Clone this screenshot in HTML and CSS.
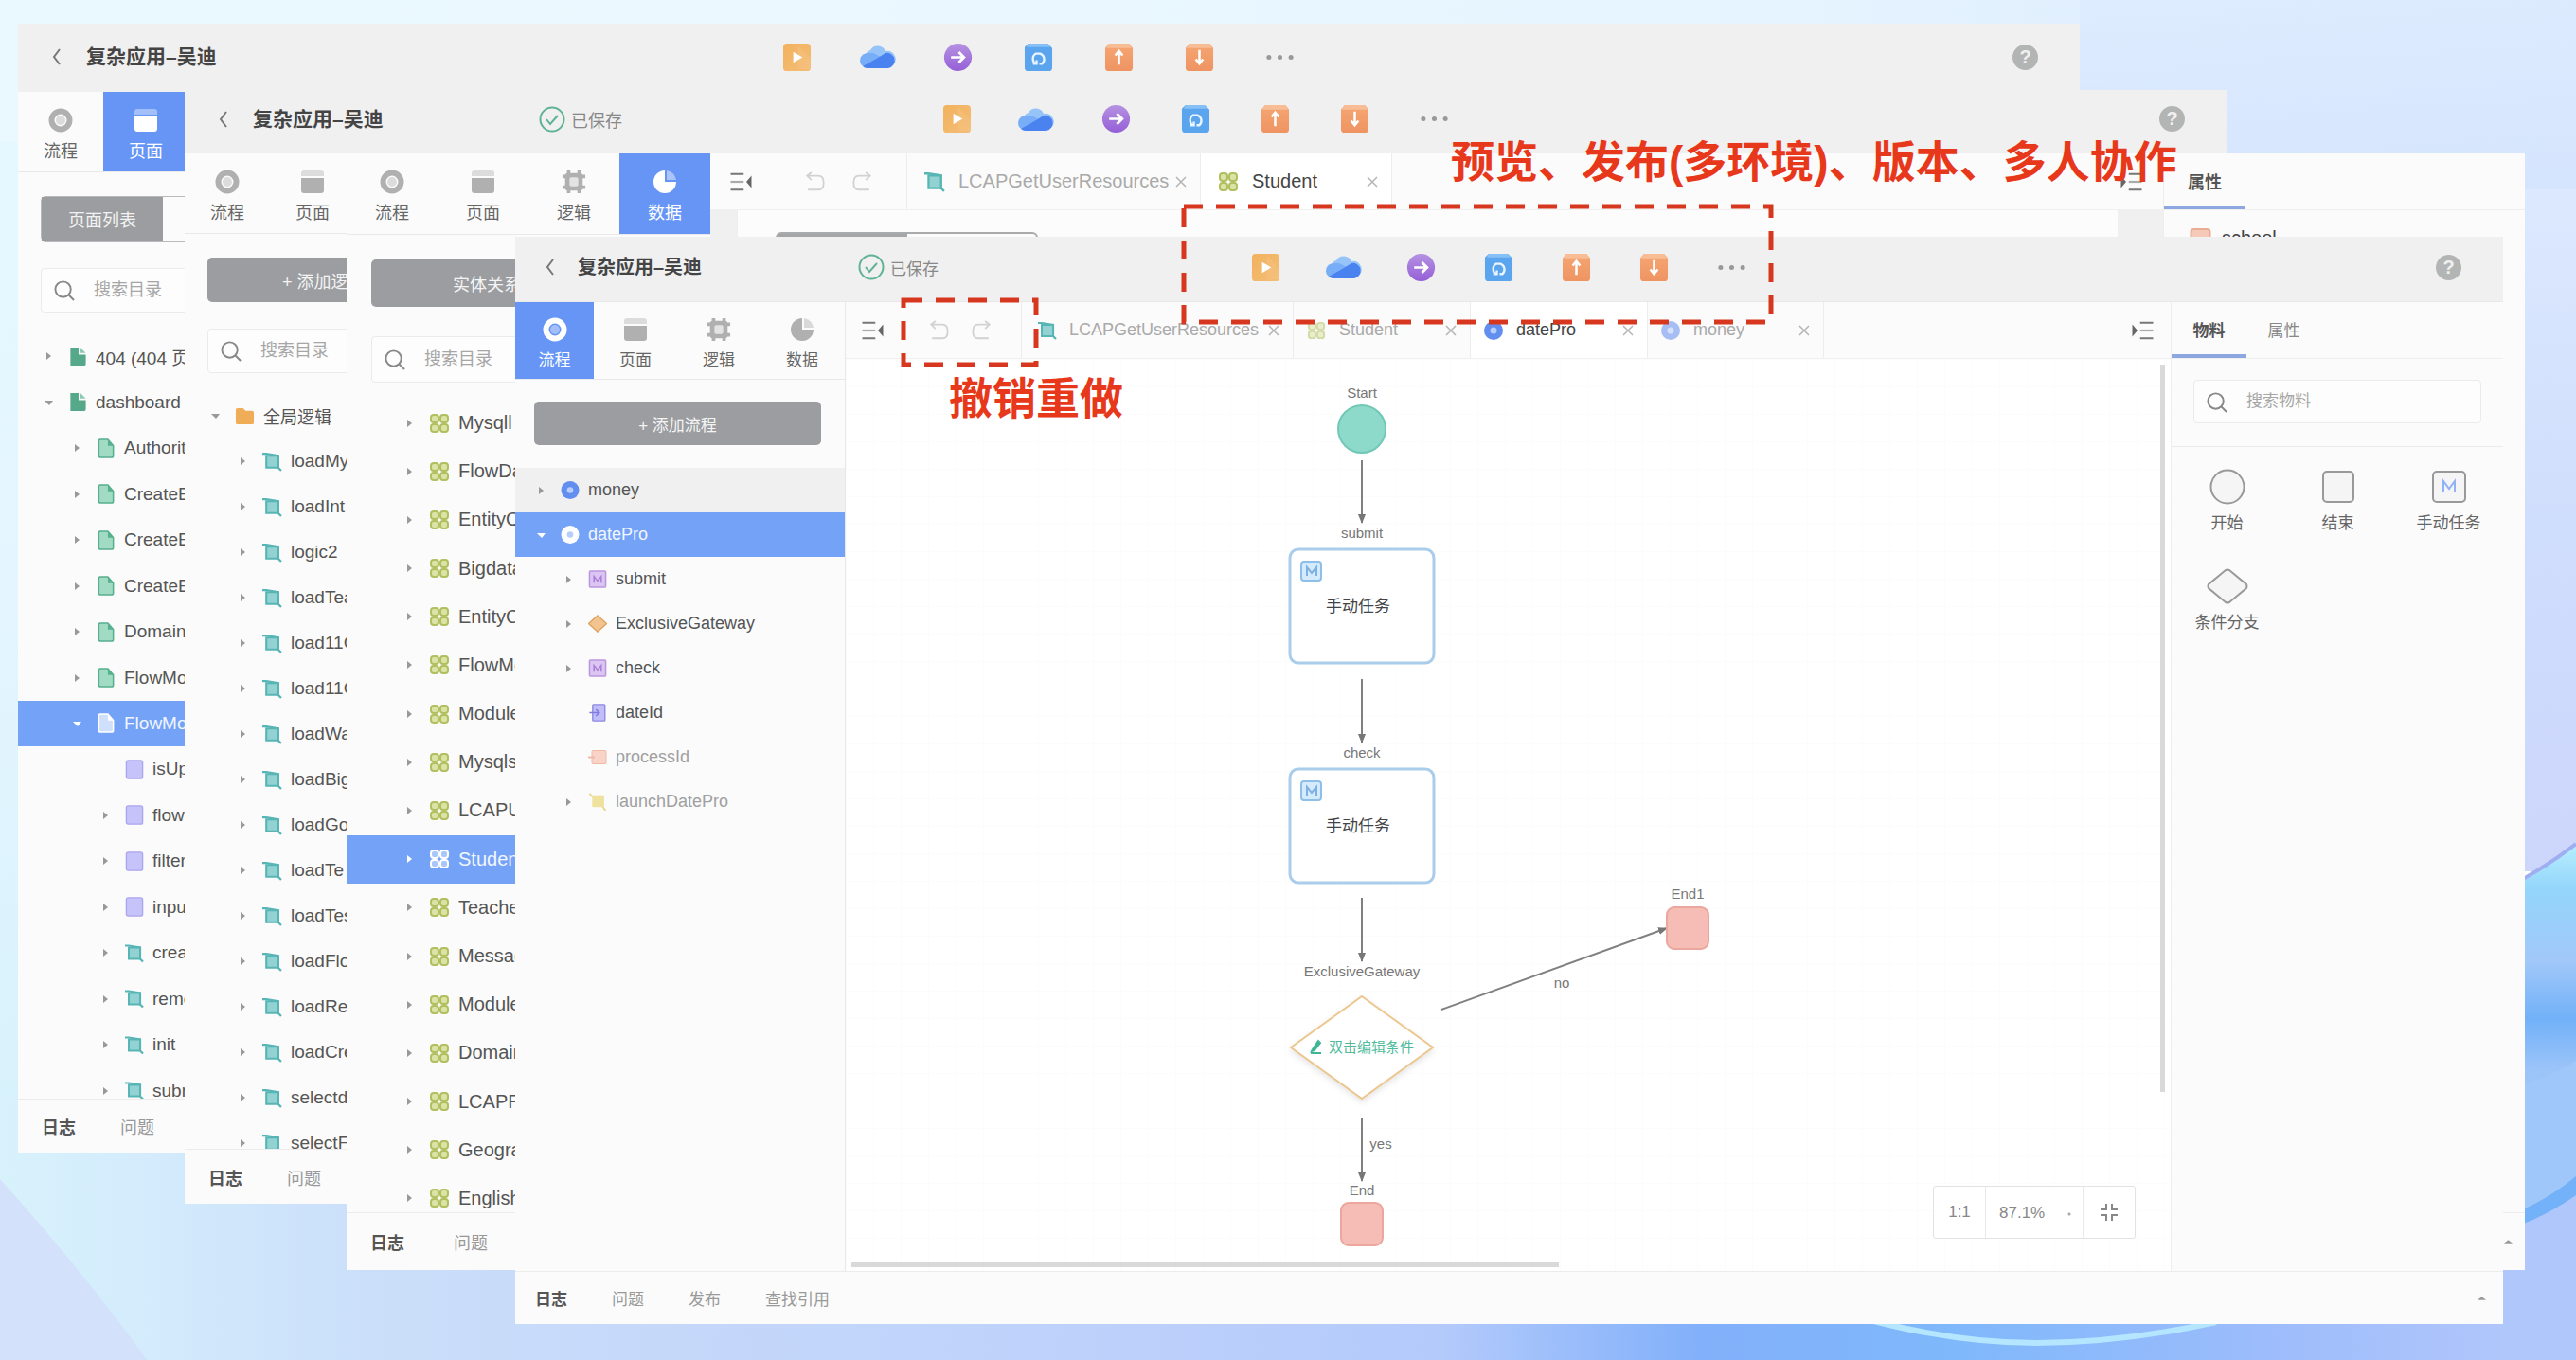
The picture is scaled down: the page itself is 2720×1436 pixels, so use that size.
FILE: index.html
```html
<!DOCTYPE html>
<html lang="zh-CN">
<head>
<meta charset="utf-8">
<title>复杂应用–吴迪</title>
<link rel="stylesheet" href="styles.css">
</head>
<body>
<svg class="sprite" aria-hidden="true">
  <defs>
    <linearGradient id="g-play" x1="0" y1="0" x2="1" y2="1"><stop offset="0" stop-color="#f2b25e"/><stop offset="1" stop-color="#f4bd76"/></linearGradient>
    <linearGradient id="g-purple" x1="0" y1="0" x2="0" y2="1"><stop offset="0" stop-color="#b592e2"/><stop offset="1" stop-color="#955fd6"/></linearGradient>
    <linearGradient id="g-orange" x1="0" y1="0" x2="0" y2="1"><stop offset="0" stop-color="#f5a673"/><stop offset="1" stop-color="#ee9462"/></linearGradient>
  </defs>
  <symbol id="back" viewBox="0 0 20 24"><path d="M14 4 8 12l6 8" fill="none" stroke="#777" stroke-width="2"/></symbol>
  <symbol id="check" viewBox="0 0 28 28"><circle cx="14" cy="14" r="12.5" fill="none" stroke="#5fb394" stroke-width="2"/><path d="m8 14 4 5 8-9" fill="none" stroke="#5fb394" stroke-width="2"/></symbol>
  <symbol id="play" viewBox="0 0 32 32"><rect x="1" y="1" width="30" height="30" rx="4" fill="url(#g-play)"/><path d="m31 17-14-14v26h14z" fill="#f6c586" opacity=".4"/><path d="M12 10v12l10-6z" fill="#fff"/></symbol>
  <symbol id="cloud" viewBox="0 0 40 32"><path d="M7 15a7 7 0 0 1 5-6 9 9 0 0 1 16 1 8 8 0 0 1 4 17H9A7 7 0 0 1 7 15z" fill="#97c4f8"/><path d="M8 12q-7 2-7 8t8 8h8L27 18 15 12z" fill="#78aef7"/><path d="M4 26 20 17l8-5a8 8 0 0 1 3 16H9q-3 0-5-2z" fill="#4a82f0"/></symbol>
  <symbol id="go" viewBox="0 0 34 34"><circle cx="17" cy="17" r="16" fill="url(#g-purple)"/><path d="M9 17h14M18 11l6 6-6 6" fill="none" stroke="#fff" stroke-width="3"/></symbol>
  <symbol id="sync" viewBox="0 0 32 32"><path d="M5 1h21l5 5v21a4 4 0 0 1-4 4H5a4 4 0 0 1-4-4V5z" fill="#5ba5ee"/><path d="M5 1h21l3 4H3z" fill="#86c0f6"/><path d="M13 23a6.500 6.500 0 0 1 0-11h5a6.500 6.500 0 0 1 2 11h-3M10 23h4v-4" fill="none" stroke="#e9f5ff" stroke-width="2.4"/></symbol>
  <symbol id="up" viewBox="0 0 32 32"><path d="M5 1h22l4 5v21a4 4 0 0 1-4 4H5a4 4 0 0 1-4-4V6z" fill="url(#g-orange)"/><path d="M5 1h22l3 5H2z" fill="#f8bd94"/><path d="M16 24V10m-4 4 4-5 4 5" fill="none" stroke="#fff" stroke-width="2.6"/></symbol>
  <symbol id="down" viewBox="0 0 32 32"><path d="M5 1h22l4 5v21a4 4 0 0 1-4 4H5a4 4 0 0 1-4-4V6z" fill="url(#g-orange)"/><path d="M5 1h22l3 5H2z" fill="#f8bd94"/><path d="M16 8v14m-4-4 4 5 4-5" fill="none" stroke="#fff" stroke-width="2.6"/></symbol>
  <symbol id="dots" viewBox="0 0 32 32"><g fill="#999"><circle cx="4" cy="16" r="2.6"/><circle cx="16" cy="16" r="2.6"/><circle cx="28" cy="16" r="2.6"/></g></symbol>
  <symbol id="flow" viewBox="0 0 26 26"><circle cx="13" cy="13" r="9.5" fill="none" stroke="currentColor" stroke-width="6"/><circle cx="13" cy="13" r="5" fill="currentColor" opacity=".4"/></symbol>
  <symbol id="page" viewBox="0 0 26 26"><path d="M1 7V4q0-3 3-3h18q3 0 3 3v3z" fill="currentColor" opacity=".4"/><path d="M1 9h24v13q0 3-3 3H4q-3 0-3-3z" fill="currentColor"/></symbol>
  <symbol id="logic" viewBox="0 0 28 28"><path d="M8 1v26M20 1v26M1 8h26M1 20h26" stroke="currentColor" stroke-width="4"/><rect x="4" y="4" width="20" height="20" rx="3" fill="currentColor"/><rect x="9" y="9" width="10" height="10" rx="2" fill="#fff" opacity=".65"/></symbol>
  <symbol id="data" viewBox="0 0 26 26"><path d="M13 1a12 12 0 1 0 12 12H13z" fill="currentColor"/><path d="M15 1a12 12 0 0 1 10 10H15z" fill="currentColor" opacity=".45"/></symbol>
  <symbol id="search" viewBox="0 0 24 24"><circle cx="10" cy="11" r="8.5" fill="none" stroke="#888" stroke-width="2"/><path d="m16 17 6 6" stroke="#888" stroke-width="2"/></symbol>
  <symbol id="right" viewBox="0 0 12 12"><path d="M4 2v8l5-4z" fill="currentColor"/></symbol>
  <symbol id="open" viewBox="0 0 12 12"><path d="M2 4h9L7 9z" fill="currentColor"/></symbol>
  <symbol id="pagefill" viewBox="0 0 20 22"><path d="M2 1h9v8h8v10q0 2-2 2H2z" fill="#55a98a"/><path d="m13 1 6 6h-6z" fill="#8ccbb2"/></symbol>
  <symbol id="doc" viewBox="0 0 20 22"><path d="M3 1h9l6 7v11q0 2-2 2H4q-2 0-2-2V2z" fill="#a1dbc4" stroke="#57b08f" stroke-width="1.6"/><path d="M12 1v7h6" fill="#57b08f"/></symbol>
  <symbol id="docw" viewBox="0 0 20 22"><path d="M3 1h9l6 7v11q0 2-2 2H4q-2 0-2-2V2z" fill="#cfe0fd" stroke="#fff" stroke-width="1.6"/><path d="M12 1v7h6" fill="#fff"/></symbol>
  <symbol id="var" viewBox="0 0 20 22"><rect x="1" y="1" width="18" height="20" rx="2" fill="#c6c3fa" stroke="#a9a5ee" stroke-width="1.4"/></symbol>
  <symbol id="fn" viewBox="0 0 20 20"><path d="M0 2h4l12 2v12l3 3" fill="none" stroke="#58b5b5" stroke-width="2.2"/><path d="M4 4h12v12H4z" fill="#92d2d3" stroke="#58b5b5" stroke-width="2"/></symbol>
  <symbol id="fny" viewBox="0 0 20 20"><path d="m1 1 3 3h12v12l3 4" fill="none" stroke="#e8d78a" stroke-width="2"/><path d="M4 4h12v12H4z" fill="#efe29e"/></symbol>
  <symbol id="folder" viewBox="0 0 22 20"><path d="M1 3q0-2 2-2h6l3 3h7q2 0 2 2v11q0 2-2 2H3q-2 0-2-2z" fill="#f0ad57"/></symbol>
  <symbol id="ent" viewBox="0 0 22 22"><g fill="#dbe3a6" stroke="#b2bf5e" stroke-width="2"><rect x="2" y="2" width="8" height="8" rx="3"/><rect x="12" y="2" width="8" height="8" rx="3"/><rect x="2" y="12" width="8" height="8" rx="3"/><rect x="12" y="12" width="8" height="8" rx="3"/></g></symbol>
  <symbol id="entw" viewBox="0 0 22 22"><g fill="#a9c6fa" stroke="#fff" stroke-width="2"><rect x="2" y="2" width="8" height="8" rx="3"/><rect x="12" y="2" width="8" height="8" rx="3"/><rect x="2" y="12" width="8" height="8" rx="3"/><rect x="12" y="12" width="8" height="8" rx="3"/></g></symbol>
  <symbol id="proc" viewBox="0 0 20 20"><circle cx="10" cy="10" r="10" fill="#628ef0"/><circle cx="10" cy="10" r="3.5" fill="#b7cdfa"/></symbol>
  <symbol id="procw" viewBox="0 0 20 20"><circle cx="10" cy="10" r="10" fill="#fff"/><circle cx="10" cy="10" r="3.5" fill="#b7cdfa"/></symbol>
  <symbol id="task" viewBox="0 0 20 20"><rect x="1" y="1" width="18" height="18" rx="1" fill="#dcc4f3" stroke="#b997de" stroke-width="1.6"/><path d="M6 14V7l4 5 4-5v7" fill="none" stroke="#a77fd4" stroke-width="1.6"/></symbol>
  <symbol id="gate" viewBox="0 0 20 20"><path d="m10 1 10 9-10 9L0 10z" fill="#f3c48f" stroke="#dda35f" stroke-width="1.4"/></symbol>
  <symbol id="in" viewBox="0 0 20 22"><rect x="4" y="1" width="15" height="20" rx="1" fill="#c0bdf9" stroke="#8e8ae2" stroke-width="1.6"/><path d="M0 11h12m-4-4 4 4-4 4" fill="none" stroke="#7f7be0" stroke-width="1.8"/></symbol>
  <symbol id="pid" viewBox="0 0 20 16"><rect x="4" y="1" width="15" height="14" rx="1" fill="#f8d3c6" stroke="#efbba9"/><path d="M0 8h7" stroke="#efbba9" stroke-width="2"/></symbol>
  <symbol id="fold" viewBox="0 0 26 24"><path d="M1 3h15M1 21h15" stroke="#777" stroke-width="2.4"/><path d="M1 12h15" stroke="#aaa" stroke-width="2.4"/><path d="M25 5v14l-6-7z" fill="#666"/></symbol>
  <symbol id="undo" viewBox="0 0 24 24"><path d="M3 5h13q6 0 6 8t-6 8H4M8 1 3 5l5 5" fill="none" stroke="#d2d2d2" stroke-width="2"/></symbol>
  <symbol id="close" viewBox="0 0 12 12"><path d="m1 1 10 10M11 1 1 11" stroke="#b5b5b5" stroke-width="1.5"/></symbol>
  <symbol id="caret" viewBox="0 0 12 6"><path d="m1 5 5-4 5 4z" fill="#999"/></symbol>
</svg>

<svg class="wallpaper" viewBox="0 0 2720 1436" preserveAspectRatio="none" aria-hidden="true">
  <defs>
    <linearGradient id="w-top" x1="0" x2="1" y1="0" y2="0"><stop offset="0" stop-color="#e9f9ff"/><stop offset=".3" stop-color="#ebf8ff"/><stop offset=".65" stop-color="#e6f5ff"/><stop offset="1" stop-color="#dceafd"/></linearGradient>
    <linearGradient id="w-left" x1="0" x2="0" y1="0" y2="1"><stop offset="0" stop-color="#e6f8ff"/><stop offset=".5" stop-color="#e4f5ff"/><stop offset="1" stop-color="#d8f2fc"/></linearGradient>
    <linearGradient id="w-right" x1="0" x2="0" y1="0" y2="1"><stop offset="0" stop-color="#dcebfe"/><stop offset=".6" stop-color="#c4d5fc"/><stop offset="1" stop-color="#bfccfa"/></linearGradient>
    <linearGradient id="w-bottom" x1="0" x2="1" y1="0" y2="0"><stop offset="0" stop-color="#d8f2fc"/><stop offset=".06" stop-color="#d3ebfc"/><stop offset=".14" stop-color="#cbdffa"/><stop offset=".24" stop-color="#c6d9fa"/><stop offset=".44" stop-color="#bdd0fb"/><stop offset=".56" stop-color="#b3cafb"/><stop offset=".66" stop-color="#82b0fa"/><stop offset=".76" stop-color="#7fb8fb"/><stop offset=".88" stop-color="#9dbcfb"/><stop offset="1" stop-color="#b6c9fb"/></linearGradient>
    <linearGradient id="w-ribbon" x1="0" x2="0" y1="0" y2="1"><stop offset="0" stop-color="#b6eefe"/><stop offset=".12" stop-color="#94d5fb"/><stop offset=".32" stop-color="#a1c8f9"/><stop offset=".48" stop-color="#72b1f8"/><stop offset=".62" stop-color="#9bc4f9"/><stop offset=".85" stop-color="#9fc8f9"/><stop offset="1" stop-color="#85bbfa"/></linearGradient>
  </defs>
  <rect width="2720" height="200" fill="url(#w-top)"/>
  <rect y="150" width="300" height="1000" fill="url(#w-left)"/>
  <path d="M2196 0h524v920h-524z" fill="url(#w-right)" opacity=".8"/>
  <rect y="1150" width="2720" height="286" fill="url(#w-bottom)"/>
  <path d="M0 1245q90 100 155 191H0z" fill="#d3e1fb"/>
  <path d="M2640 943q44-22 80-50v250q-30 60-80 130z" fill="url(#w-ribbon)"/>
  <path d="M2640 941q44-22 80-50" fill="none" stroke="#9eaef0" stroke-width="4"/>
  <path d="M2640 1150q50-10 80-30v130q-40 30-80 50z" fill="#9fc7f9"/>
  <path d="M2640 1286q44-14 80-44v22q-36 24-80 38z" fill="#73b1f8"/>
  <path d="M2640 1300q40-10 80-38v174h-80z" fill="#b0c7fb"/>
  <path d="M1960 1390q100 28 190 28t190-22" fill="none" stroke="#b5e6ff" stroke-width="6"/>
</svg>

<section class="win win-a">
  <header class="bar">
    <div class="who"><button class="ib back" aria-label="返回"><svg><use href="#back"/></svg></button><h2>复杂应用–吴迪</h2></div>
    <div class="tools">
      <button class="ib" aria-label="预览"><svg><use href="#play"/></svg></button><button class="ib wide" aria-label="发布"><svg><use href="#cloud"/></svg></button><button class="ib" aria-label="跳转"><svg><use href="#go"/></svg></button><button class="ib" aria-label="同步"><svg><use href="#sync"/></svg></button><button class="ib" aria-label="导出"><svg><use href="#up"/></svg></button><button class="ib" aria-label="导入"><svg><use href="#down"/></svg></button><button class="ib" aria-label="更多"><svg><use href="#dots"/></svg></button>
    </div>
    <button class="help" aria-label="帮助">?</button>
  </header>
  <div class="body">
    <aside class="side">
      <nav class="nav">
        <button><svg><use href="#flow"/></svg>流程</button><button class="on"><svg><use href="#page"/></svg>页面</button>
      </nav>
      <div class="seg"><button class="on">页面列表</button><button></button></div>
      <label class="find"><svg><use href="#search"/></svg><input type="search" placeholder="搜索目录" aria-label="搜索目录"></label>
      <div class="scroll"><ul class="tree">
        <li><svg class="ar"><use href="#right"/></svg><svg class="ic"><use href="#pagefill"/></svg>404 (404 页面)</li>
        <li><svg class="ar"><use href="#open"/></svg><svg class="ic"><use href="#pagefill"/></svg>dashboard</li>
        <li class="l2"><svg class="ar"><use href="#right"/></svg><svg class="ic"><use href="#doc"/></svg>Authority</li>
        <li class="l2"><svg class="ar"><use href="#right"/></svg><svg class="ic"><use href="#doc"/></svg>CreateEntity</li>
        <li class="l2"><svg class="ar"><use href="#right"/></svg><svg class="ic"><use href="#doc"/></svg>CreateEntity</li>
        <li class="l2"><svg class="ar"><use href="#right"/></svg><svg class="ic"><use href="#doc"/></svg>CreateEntity</li>
        <li class="l2"><svg class="ar"><use href="#right"/></svg><svg class="ic"><use href="#doc"/></svg>Domain</li>
        <li class="l2"><svg class="ar"><use href="#right"/></svg><svg class="ic"><use href="#doc"/></svg>FlowModule</li>
        <li class="l2 on"><svg class="ar"><use href="#open"/></svg><svg class="ic"><use href="#docw"/></svg>FlowModule</li>
        <li class="l3"><span class="ar"></span><svg class="ic"><use href="#var"/></svg>isUpdate</li>
        <li class="l3"><svg class="ar"><use href="#right"/></svg><svg class="ic"><use href="#var"/></svg>flow</li>
        <li class="l3"><svg class="ar"><use href="#right"/></svg><svg class="ic"><use href="#var"/></svg>filter</li>
        <li class="l3"><svg class="ar"><use href="#right"/></svg><svg class="ic"><use href="#var"/></svg>input</li>
        <li class="l3"><svg class="ar"><use href="#right"/></svg><svg class="ic"><use href="#fn"/></svg>create</li>
        <li class="l3"><svg class="ar"><use href="#right"/></svg><svg class="ic"><use href="#fn"/></svg>remove</li>
        <li class="l3"><svg class="ar"><use href="#right"/></svg><svg class="ic"><use href="#fn"/></svg>init</li>
        <li class="l3"><svg class="ar"><use href="#right"/></svg><svg class="ic"><use href="#fn"/></svg>submit</li>
      </ul></div>
    </aside>
  </div>
  <footer class="foot"><button class="on">日志</button><button>问题</button></footer>
</section>

<section class="win win-b">
  <header class="bar">
    <div class="who"><button class="ib back" aria-label="返回"><svg><use href="#back"/></svg></button><h2>复杂应用–吴迪</h2><span class="saved"><svg><use href="#check"/></svg>已保存</span></div>
    <div class="tools">
      <button class="ib" aria-label="预览"><svg><use href="#play"/></svg></button><button class="ib wide" aria-label="发布"><svg><use href="#cloud"/></svg></button><button class="ib" aria-label="跳转"><svg><use href="#go"/></svg></button><button class="ib" aria-label="同步"><svg><use href="#sync"/></svg></button><button class="ib" aria-label="导出"><svg><use href="#up"/></svg></button><button class="ib" aria-label="导入"><svg><use href="#down"/></svg></button><button class="ib" aria-label="更多"><svg><use href="#dots"/></svg></button>
    </div>
    <button class="help" aria-label="帮助">?</button>
  </header>
  <div class="body">
    <aside class="side">
      <nav class="nav">
        <button><svg><use href="#flow"/></svg>流程</button><button><svg><use href="#page"/></svg>页面</button>
      </nav>
      <button class="add">+ 添加逻辑</button>
      <label class="find"><svg><use href="#search"/></svg><input type="search" placeholder="搜索目录" aria-label="搜索目录"></label>
      <div class="scroll"><ul class="tree">
        <li><svg class="ar"><use href="#open"/></svg><svg class="ic"><use href="#folder"/></svg>全局逻辑</li>
        <li class="l2"><svg class="ar"><use href="#right"/></svg><svg class="ic"><use href="#fn"/></svg>loadMysql</li>
        <li class="l2"><svg class="ar"><use href="#right"/></svg><svg class="ic"><use href="#fn"/></svg>loadInt</li>
        <li class="l2"><svg class="ar"><use href="#right"/></svg><svg class="ic"><use href="#fn"/></svg>logic2</li>
        <li class="l2"><svg class="ar"><use href="#right"/></svg><svg class="ic"><use href="#fn"/></svg>loadTeacher</li>
        <li class="l2"><svg class="ar"><use href="#right"/></svg><svg class="ic"><use href="#fn"/></svg>load11Girl</li>
        <li class="l2"><svg class="ar"><use href="#right"/></svg><svg class="ic"><use href="#fn"/></svg>load11Get</li>
        <li class="l2"><svg class="ar"><use href="#right"/></svg><svg class="ic"><use href="#fn"/></svg>loadWater</li>
        <li class="l2"><svg class="ar"><use href="#right"/></svg><svg class="ic"><use href="#fn"/></svg>loadBigdata</li>
        <li class="l2"><svg class="ar"><use href="#right"/></svg><svg class="ic"><use href="#fn"/></svg>loadGo</li>
        <li class="l2"><svg class="ar"><use href="#right"/></svg><svg class="ic"><use href="#fn"/></svg>loadTe</li>
        <li class="l2"><svg class="ar"><use href="#right"/></svg><svg class="ic"><use href="#fn"/></svg>loadTest</li>
        <li class="l2"><svg class="ar"><use href="#right"/></svg><svg class="ic"><use href="#fn"/></svg>loadFlow</li>
        <li class="l2"><svg class="ar"><use href="#right"/></svg><svg class="ic"><use href="#fn"/></svg>loadRe</li>
        <li class="l2"><svg class="ar"><use href="#right"/></svg><svg class="ic"><use href="#fn"/></svg>loadCreate</li>
        <li class="l2"><svg class="ar"><use href="#right"/></svg><svg class="ic"><use href="#fn"/></svg>selectd</li>
        <li class="l2"><svg class="ar"><use href="#right"/></svg><svg class="ic"><use href="#fn"/></svg>selectFlow</li>
      </ul></div>
    </aside>
  </div>
  <footer class="foot"><button class="on">日志</button><button>问题</button></footer>
</section>

<section class="win win-c">
  <div class="body">
    <aside class="side">
      <nav class="nav">
        <button><svg><use href="#flow"/></svg>流程</button><button><svg><use href="#page"/></svg>页面</button><button><svg><use href="#logic"/></svg>逻辑</button><button class="on"><svg><use href="#data"/></svg>数据</button>
      </nav>
      <button class="add">实体关系图</button>
      <label class="find"><svg><use href="#search"/></svg><input type="search" placeholder="搜索目录" aria-label="搜索目录"></label>
      <div class="scroll"><ul class="tree">
        <li><svg class="ar"><use href="#right"/></svg><svg class="ic"><use href="#ent"/></svg>Mysqll</li>
        <li><svg class="ar"><use href="#right"/></svg><svg class="ic"><use href="#ent"/></svg>FlowData</li>
        <li><svg class="ar"><use href="#right"/></svg><svg class="ic"><use href="#ent"/></svg>EntityOne</li>
        <li><svg class="ar"><use href="#right"/></svg><svg class="ic"><use href="#ent"/></svg>Bigdata</li>
        <li><svg class="ar"><use href="#right"/></svg><svg class="ic"><use href="#ent"/></svg>EntityCopy</li>
        <li><svg class="ar"><use href="#right"/></svg><svg class="ic"><use href="#ent"/></svg>FlowModule</li>
        <li><svg class="ar"><use href="#right"/></svg><svg class="ic"><use href="#ent"/></svg>Module</li>
        <li><svg class="ar"><use href="#right"/></svg><svg class="ic"><use href="#ent"/></svg>Mysqls</li>
        <li><svg class="ar"><use href="#right"/></svg><svg class="ic"><use href="#ent"/></svg>LCAPUser</li>
        <li class="on"><svg class="ar"><use href="#right"/></svg><svg class="ic"><use href="#entw"/></svg>Student</li>
        <li><svg class="ar"><use href="#right"/></svg><svg class="ic"><use href="#ent"/></svg>Teacher</li>
        <li><svg class="ar"><use href="#right"/></svg><svg class="ic"><use href="#ent"/></svg>Message</li>
        <li><svg class="ar"><use href="#right"/></svg><svg class="ic"><use href="#ent"/></svg>Module</li>
        <li><svg class="ar"><use href="#right"/></svg><svg class="ic"><use href="#ent"/></svg>Domain</li>
        <li><svg class="ar"><use href="#right"/></svg><svg class="ic"><use href="#ent"/></svg>LCAPRole</li>
        <li><svg class="ar"><use href="#right"/></svg><svg class="ic"><use href="#ent"/></svg>Geography</li>
        <li><svg class="ar"><use href="#right"/></svg><svg class="ic"><use href="#ent"/></svg>English</li>
      </ul></div>
    </aside>
    <main class="main">
      <div class="tabs">
        <div class="edit"><button class="ib fold" aria-label="收起左栏"><svg><use href="#fold"/></svg></button><button class="ib" aria-label="撤销"><svg><use href="#undo"/></svg></button><button class="ib flip" aria-label="重做"><svg><use href="#undo"/></svg></button></div>
        <div class="tab first"><svg class="ic"><use href="#fn"/></svg><span>LCAPGetUserResources</span><button class="x" aria-label="关闭"><svg><use href="#close"/></svg></button></div>
        <div class="tab on"><svg class="ic"><use href="#ent"/></svg><span>Student</span><button class="x" aria-label="关闭"><svg><use href="#close"/></svg></button></div>
        <button class="ib fold flip last" aria-label="收起右栏"><svg><use href="#fold"/></svg></button>
      </div>
      <div class="stage"><div class="sheet"><div class="pill"><i></i><i></i></div></div></div>
    </main>
    <aside class="props">
      <div class="ptabs"><button class="on">属性</button></div>
      <p class="field"><svg viewBox="0 0 22 20"><rect x="1" y="1" width="20" height="18" rx="3" fill="#f6c9b8" stroke="#ecab94" stroke-width="2"/></svg>school</p>
    </aside>
  </div>
  <footer class="foot"><button class="on">日志</button><button>问题</button><svg class="caret"><use href="#caret"/></svg></footer>
</section>

<section class="win win-d">
  <header class="bar">
    <div class="who"><button class="ib back" aria-label="返回"><svg><use href="#back"/></svg></button><h2>复杂应用–吴迪</h2><span class="saved"><svg><use href="#check"/></svg>已保存</span></div>
    <div class="tools">
      <button class="ib" aria-label="预览"><svg><use href="#play"/></svg></button><button class="ib wide" aria-label="发布"><svg><use href="#cloud"/></svg></button><button class="ib" aria-label="跳转"><svg><use href="#go"/></svg></button><button class="ib" aria-label="同步"><svg><use href="#sync"/></svg></button><button class="ib" aria-label="导出"><svg><use href="#up"/></svg></button><button class="ib" aria-label="导入"><svg><use href="#down"/></svg></button><button class="ib" aria-label="更多"><svg><use href="#dots"/></svg></button>
    </div>
    <button class="help" aria-label="帮助">?</button>
  </header>
  <div class="body">
    <aside class="side">
      <nav class="nav">
        <button class="on"><svg><use href="#flow"/></svg>流程</button><button><svg><use href="#page"/></svg>页面</button><button><svg><use href="#logic"/></svg>逻辑</button><button><svg><use href="#data"/></svg>数据</button>
      </nav>
      <button class="add">+ 添加流程</button>
      <div class="scroll"><ul class="tree">
        <li class="hover"><svg class="ar"><use href="#right"/></svg><svg class="ic"><use href="#proc"/></svg>money</li>
        <li class="on"><svg class="ar"><use href="#open"/></svg><svg class="ic"><use href="#procw"/></svg>datePro</li>
        <li class="l2"><svg class="ar"><use href="#right"/></svg><svg class="ic"><use href="#task"/></svg>submit</li>
        <li class="l2"><svg class="ar"><use href="#right"/></svg><svg class="ic"><use href="#gate"/></svg>ExclusiveGateway</li>
        <li class="l2"><svg class="ar"><use href="#right"/></svg><svg class="ic"><use href="#task"/></svg>check</li>
        <li class="l2"><span class="ar"></span><svg class="ic"><use href="#in"/></svg>dateId</li>
        <li class="l2 dim"><span class="ar"></span><svg class="ic"><use href="#pid"/></svg>processId</li>
        <li class="l2 dim"><svg class="ar"><use href="#right"/></svg><svg class="ic"><use href="#fny"/></svg>launchDatePro</li>
      </ul></div>
    </aside>
    <main class="main">
      <div class="tabs">
        <div class="edit"><button class="ib fold" aria-label="收起左栏"><svg><use href="#fold"/></svg></button><button class="ib" aria-label="撤销"><svg><use href="#undo"/></svg></button><button class="ib flip" aria-label="重做"><svg><use href="#undo"/></svg></button></div>
        <div class="tab first"><svg class="ic"><use href="#fn"/></svg><span>LCAPGetUserResources</span><button class="x" aria-label="关闭"><svg><use href="#close"/></svg></button></div>
        <div class="tab faded"><svg class="ic"><use href="#ent"/></svg><span>Student</span><button class="x" aria-label="关闭"><svg><use href="#close"/></svg></button></div>
        <div class="tab on"><svg class="ic"><use href="#proc"/></svg><span>datePro</span><button class="x" aria-label="关闭"><svg><use href="#close"/></svg></button></div>
        <div class="tab faded"><svg class="ic"><use href="#proc"/></svg><span>money</span><button class="x" aria-label="关闭"><svg><use href="#close"/></svg></button></div>
        <button class="ib fold flip last" aria-label="收起右栏"><svg><use href="#fold"/></svg></button>
      </div>
      <div class="canvas">
        <svg class="diagram" width="1390" height="950" viewBox="0 0 1390 950">
          <defs><marker id="tip" markerWidth="10" markerHeight="8" refX="9" refY="4" orient="auto" markerUnits="userSpaceOnUse"><path d="m0 0 10 4-10 4z" fill="#777"/></marker></defs>
          <g class="edge"><path d="M545 107v66"/><path d="M545 338v67"/><path d="M545 569v67"/><path d="M545 801v67"/><path d="m629 687 238-86"/></g>
          <text x="545" y="41">Start</text>
          <circle cx="545" cy="74" r="25" fill="#8ddacb" stroke="#72c8b6" stroke-width="2"/>
          <text x="545" y="189">submit</text>
          <rect class="box" x="469" y="201" width="152" height="120" rx="9"/>
          <rect class="mark" x="481" y="214" width="21" height="20" rx="3"/><path class="em" d="M487 229v-9l5 6 5-6v9"/>
          <text class="name" x="541" y="267">手动任务</text>
          <text x="545" y="421">check</text>
          <rect class="box" x="469" y="433" width="152" height="120" rx="9"/>
          <rect class="mark" x="481" y="446" width="21" height="20" rx="3"/><path class="em" d="M487 461v-9l5 6 5-6v9"/>
          <text class="name" x="541" y="499">手动任务</text>
          <text x="545" y="652">ExclusiveGateway</text>
          <path class="gate" d="m545 673 75 54-75 54-75-54z"/>
          <path d="m493 729 6-9 2 2-6 8-3 1zM491 733h11" fill="#3fb695" stroke="#3fb695" stroke-width="2"/>
          <text class="cond" x="555" y="732">双击编辑条件</text>
          <text x="565" y="834">yes</text>
          <text x="545" y="883">End</text>
          <rect class="term" x="523" y="891" width="44" height="45" rx="8"/>
          <text x="889" y="570">End1</text>
          <rect class="term" x="867" y="579" width="44" height="44" rx="8"/>
          <text x="756" y="664">no</text>
        </svg>
        <i class="vbar"></i><i class="hbar"></i>
        <div class="zoom">
          <button>1:1</button>
          <select aria-label="缩放比例"><option>87.1%</option></select>
          <button aria-label="适应画布"><svg viewBox="0 0 20 20"><path d="M1 7h6V1M13 1v6h6M1 13h6v6M13 19v-6h6" fill="none" stroke="#888" stroke-width="2"/></svg></button>
        </div>
      </div>
    </main>
    <aside class="props">
      <div class="ptabs"><button class="on">物料</button><button>属性</button></div>
      <div class="pfind"><label class="find"><svg><use href="#search"/></svg><input type="search" placeholder="搜索物料" aria-label="搜索物料"></label></div>
      <div class="parts">
        <button><svg viewBox="0 0 44 38"><circle cx="22" cy="19" r="17.5"/></svg>开始</button>
        <button><svg viewBox="0 0 44 38"><rect x="6" y="3" width="32" height="32" rx="4"/></svg>结束</button>
        <button><svg viewBox="0 0 44 38"><rect x="5" y="3" width="34" height="32" rx="4"/><path class="letter" d="M16 25V13l6 8 6-8v12"/></svg>手动任务</button>
        <button><svg viewBox="0 0 44 38"><path d="M20 2q2-1 4 0l18 15q1 2 0 4L24 36q-2 1-4 0L2 21q-1-2 0-4z"/></svg>条件分支</button>
      </div>
    </aside>
  </div>
  <footer class="foot"><button class="on">日志</button><button>问题</button><button>发布</button><button>查找引用</button><svg class="caret"><use href="#caret"/></svg></footer>
</section>

<svg class="mark-box tools-box" aria-hidden="true"><rect x="3" y="3" width="620" height="122"/></svg>
<svg class="mark-box undo-box" aria-hidden="true"><rect x="3" y="3" width="140" height="68"/></svg>
<p class="note note-tools">预览、发布(多环境)、版本、多人协作</p>
<p class="note note-undo">撤销重做</p>
</body>
</html>
```
FILE: styles.css
```css
* { box-sizing: border-box; }
body {
  margin: 0;
  min-height: 100vh;
  position: relative;
  overflow: hidden;
  font-family: "Liberation Sans", "Noto Sans CJK SC", sans-serif;
  color: #555;
}
h2, p, ul { margin: 0; padding: 0; }
ul { list-style: none; }
button, input, select {
  font: inherit;
  color: inherit;
  background: none;
  border: 0;
  padding: 0;
  margin: 0;
}
svg { display: block; flex: none; }
.sprite { position: absolute; width: 0; height: 0; }
.wallpaper { position: absolute; width: 100%; height: 100%; }

/* stacked editor windows */
.win {
  --cell: 85px;
  --nav: 90px;
  --txt: 18px;
  --latin: 19px;
  --side: 364px;
  --row: 48px;
  --foot: 57px;
  position: absolute;
  display: flex;
  flex-direction: column;
  background: #fbfbfb;
  font-size: var(--txt);
  overflow: hidden;
}
.win-a { left: 19px; top: 25px; right: 524px; bottom: 219px; }
.win-b { left: 195px; top: 95px; right: 369px; bottom: 165px; --cell: 84px; --foot: 58px; }
.win-c { left: 366px; top: 162px; right: 54px; bottom: 95px; --nav: 96px; --side: 384px; --foot: 61px; --row: 51px; --latin: 20px; }
.win-d { left: 544px; top: 250px; right: 77px; bottom: 38px; --cell: 82px; --nav: 88px; --side: 348px; --row: 47px; --foot: 56px; --txt: 17px; --latin: 18px; }

.bar {
  flex: none;
  height: 72px;
  padding-bottom: 2px;
  display: grid;
  grid-template-columns: 1fr auto 1fr;
  align-items: center;
  background: #f0f0f0;
}
.win-b .bar { height: 67px; padding-bottom: 6px; }
.win-d .bar { height: 69px; padding-bottom: 4px; border-bottom: 1px solid #e8e8e8; }
.who { display: flex; align-items: center; padding-left: 30px; }
.win-d .who { padding-left: 26px; }
.ib { display: grid; place-items: center; }
.back svg { width: 20px; height: 24px; }
.who h2 { margin-left: 22px; width: 302px; font-size: 21px; font-weight: 700; line-height: 30px; color: #444; }
.win-d .who h2 { margin-left: 20px; width: 296px; font-size: 20px; }
.saved { display: flex; align-items: center; gap: 6px; color: #888; white-space: nowrap; }
.saved svg { width: 28px; height: 28px; }
.tools { display: flex; margin-right: 22px; }
.tools .ib { width: var(--cell); height: 40px; }
.tools svg { width: 31px; height: 31px; }
.tools .wide svg { width: 40px; height: 32px; }
.help {
  justify-self: end;
  width: 27px;
  height: 27px;
  margin-right: 44px;
  border-radius: 50%;
  background: #b3b5b4;
  color: #f0f0f0;
  font-size: 20px;
  font-weight: 700;
  line-height: 27px;
  text-align: center;
}

.body { flex: 1; min-height: 0; display: flex; }
.side {
  flex: none;
  width: var(--side);
  display: flex;
  flex-direction: column;
  overflow: hidden;
}
.nav { flex: none; display: flex; height: 85px; border-bottom: 1px solid #e9e9e9; }
.nav button {
  flex: none;
  width: var(--nav);
  display: flex;
  flex-direction: column;
  align-items: center;
  gap: 8px;
  padding-top: 17px;
  line-height: 24px;
  color: #666;
}
.nav svg { width: 26px; height: 26px; color: #b0b0b0; }
.nav .on { background: #6695f6; color: #fff; }
.nav .on svg { color: #fff; }
.win-c .nav { height: 86px; }
.win-d .nav { height: 82px; }
.win-d .nav button { padding-top: 16px; }
.win-d .nav button:first-child { width: 83px; }

.seg { flex: none; display: flex; margin: 25px 24px 0; height: 48px; border: 1px solid #b8b9bb; border-radius: 5px; }
.seg button { flex: 1; }
.seg .on { flex: none; width: 128px; background: #9b9da0; color: #f2f2f2; }
.add {
  flex: none;
  height: 47px;
  margin: 25px 24px 0;
  border-radius: 5px;
  background: #9b9da0;
  color: #f4f4f4;
}
.win-b .add { text-align: left; padding-left: 79px; }
.win-c .add { margin: 26px 26px 0; height: 50px; text-align: left; padding-left: 86px; }
.win-d .add { margin: 23px 25px 0 20px; height: 46px; }
.find {
  flex: none;
  display: flex;
  align-items: center;
  gap: 19px;
  height: 47px;
  margin: 28px 24px 0;
  padding-left: 13px;
  border: 1px solid #ebebeb;
  border-radius: 4px;
  background: #fdfdfd;
}
.find svg { width: 23px; height: 23px; }
.find input { flex: 1; min-width: 0; height: 100%; outline: 0; }
.find input::placeholder { color: #a6a6a6; opacity: 1; }
.win-c .find { margin: 31px 26px 0; height: 49px; }

.scroll { flex: 1; min-height: 0; overflow: hidden; padding-top: 22px; }
.win-b .scroll { padding-top: 21px; }
.win-c .scroll { padding-top: 17px; }
.win-d .scroll { padding-top: 24px; }
.tree { font-size: var(--latin); display: grid; grid-auto-rows: var(--row); }
.win-a .tree { grid-auto-rows: 1fr; height: 824px; }
.win-c .tree { grid-auto-rows: 1fr; height: 870px; }
.win-b .tree li:first-child { font-size: 18px; }
.tree li { display: flex; align-items: center; padding-left: 26px; white-space: nowrap; }
.tree .ar { width: 12px; height: 12px; margin-right: 15px; flex: none; color: #999; }
.tree .ic { width: 20px; height: 21px; margin-right: 9px; }
.tree .l2 { padding-left: 56px; }
.tree .l3 { padding-left: 86px; }
.tree .on { background: #74a2f7; color: #f1f6ff; }
.tree .on .ar { color: #fff; }
.win-b .tree .l2 { padding-left: 55px; }
.win-b .tree .ic { width: 21px; }
.win-c .tree li { padding-left: 60px; }
.win-c .tree .ic { width: 22px; height: 22px; }
.win-d .tree li { padding-left: 21px; }
.win-d .tree .l2 { padding-left: 50px; }
.win-d .tree .ic { height: 19px; }
.win-d .hover { background: #f0f0f0; }
.win-d .dim { color: #a0a0a0; }

.foot {
  flex: none;
  height: var(--foot);
  display: flex;
  align-items: center;
  gap: 47px;
  padding: 0 24px 0 25px;
  border-top: 1px solid #ececec;
  background: #fbfbfb;
}
.foot button { color: #999; }
.foot .on { color: #555; font-weight: 700; }
.win-c .foot { gap: 52px; padding-right: 12px; }
.win-d .foot { padding: 0 17px 0 21px; }
.foot .caret { width: 11px; height: 6px; margin-left: auto; }

/* editor area */
.main { flex: 1; min-width: 0; display: flex; flex-direction: column; }
.tabs { flex: none; display: flex; height: 60px; border-bottom: 1px solid #f0f0f0; font-size: var(--latin); }
.edit { flex: none; width: 207px; display: flex; align-items: center; padding-left: 20px; }
.edit .ib { margin-left: 27px; }
.ib.fold { margin-left: 0; }
.edit .fold { margin-right: 27px; }
.edit svg { width: 23px; height: 22px; }
.fold svg { width: 25px; height: 22px; }
.flip svg { transform: scaleX(-1); }
.tab {
  flex: none;
  width: 203px;
  display: flex;
  align-items: center;
  padding: 0 14px 0 18px;
  border-left: 1px solid #ededed;
  color: #aaa;
}
.tab:has(+ .last) { border-right: 1px solid #ededed; }
.tab .ic { width: 22px; height: 22px; margin-right: 14px; }
.tab .x { margin-left: auto; }
.tab .x svg { width: 12px; height: 12px; }
.tab.first { width: 310px; }
.tab.on { background: #fff; color: #444; }
.tabs .last { margin-left: auto; margin-right: 21px; }
.win-d .main { border-left: 1px solid #e8e8e8; }
.win-d .edit { width: 185px; padding-left: 16px; }
.win-d .edit .ib { margin-left: 22px; }
.win-d .edit .fold { margin-left: 0; margin-right: 24px; }
.win-d .tab { width: 187px; padding: 0 14px; }
.win-d .tab.first { width: 287px; padding-left: 17px; }
.win-d .tab .ic { width: 20px; height: 20px; }
.win-d .tab.first .ic { margin-right: 13px; }
.win-d .faded .ic { opacity: .55; }
.win-d .tabs .last { margin-right: 17px; }

.stage { flex: 1; background: #f0f0f0; padding: 0 48px 0 28px; }
.sheet { height: 100%; background: #fcfcfc; border-left: 1px solid #eee; padding: 23px 40px; }
.pill { display: flex; width: 277px; height: 48px; border: 2px solid #a9aaab; border-radius: 6px; }
.pill i { flex: 1; }
.pill i:first-child { background: #a5a6a8; }

.props { flex: none; width: 382px; border-left: 1px solid #eee; }
.ptabs { display: flex; height: 60px; border-bottom: 1px solid #efefef; }
.ptabs button { width: 86px; color: #888; padding-bottom: 2px; }
.ptabs .on { border-bottom: 4px solid #8da8e0; padding: 2px 0 0; color: #555; font-weight: 700; }
.field { display: flex; align-items: center; gap: 11px; padding: 17px 0 0 27px; font-size: 20px; line-height: 24px; color: #444; }
.field svg { width: 23px; height: 20px; }
.win-d .props { width: 351px; }
.win-d .ptabs button { width: 79px; }
.pfind { padding: 22px 23px 24px; border-bottom: 1px solid #ebebeb; }
.pfind .find { margin: 0; height: 46px; }
.parts { display: grid; grid-template-columns: repeat(3, 117px); grid-auto-rows: 105px; padding-top: 23px; }
.parts button { display: flex; flex-direction: column; align-items: center; gap: 8px; line-height: 24px; color: #666; }
.parts svg { width: 44px; height: 38px; fill: #f5f5f5; stroke: #999; stroke-width: 2; }
.parts .letter { stroke: #8fb3f5; }

.canvas {
  flex: 1;
  position: relative;
  overflow: hidden;
  background-color: #fff;
  background-image: linear-gradient(#fcfcfc 1px, transparent 1px), linear-gradient(90deg, #fcfcfc 1px, transparent 1px);
  background-size: 29px 29px;
}
.diagram text { font-size: 15px; fill: #777; text-anchor: middle; }
.diagram .name { font-size: 17px; fill: #444; }
.diagram .cond { font-size: 15px; fill: #4fbb9c; }
.edge path { fill: none; stroke: #808080; stroke-width: 2; marker-end: url(#tip); }
.box { fill: #fff; stroke: #a9cdea; stroke-width: 3; }
.mark { fill: #d3ebfd; stroke: #8dbfe8; stroke-width: 2; }
.em { fill: none; stroke: #7eb0e2; stroke-width: 2; }
.gate { fill: #fff; stroke: #ecc78f; stroke-width: 2; filter: drop-shadow(0 3px 3px rgba(0, 0, 0, .1)); }
.term { fill: #f5bdb5; stroke: #eba79d; stroke-width: 2; }
.vbar, .hbar { position: absolute; background: #d9d9d9; }
.vbar { right: 6px; top: 6px; width: 5px; height: 768px; }
.hbar { left: 6px; bottom: 4px; width: 747px; height: 5px; }
.zoom {
  position: absolute;
  right: 37px;
  bottom: 34px;
  display: flex;
  height: 56px;
  border: 1px solid #e3e3e3;
  border-radius: 3px;
  background: #fff;
  color: #888;
}
.zoom button { width: 54px; display: grid; place-items: center; }
.zoom svg { width: 20px; height: 20px; }
.zoom select {
  width: 104px;
  padding-left: 14px;
  appearance: none;
  border: solid #e9e9e9;
  border-width: 0 1px;
  background: radial-gradient(circle at 88px 29px, #aaa 1px, transparent 2px);
}

/* callouts over the windows */
.mark-box { position: absolute; fill: none; stroke: #d7371f; stroke-width: 5; stroke-dasharray: 20 14; }
.tools-box { left: 1247px; top: 215px; width: 626px; height: 128px; }
.undo-box { left: 951px; top: 314px; width: 146px; height: 74px; }
.note { position: absolute; font-size: 46px; line-height: 60px; font-weight: 700; color: #e8381b; white-space: nowrap; }
.note-tools { left: 1532px; top: 141px; }
.note-undo { left: 1002px; top: 391px; }
```
